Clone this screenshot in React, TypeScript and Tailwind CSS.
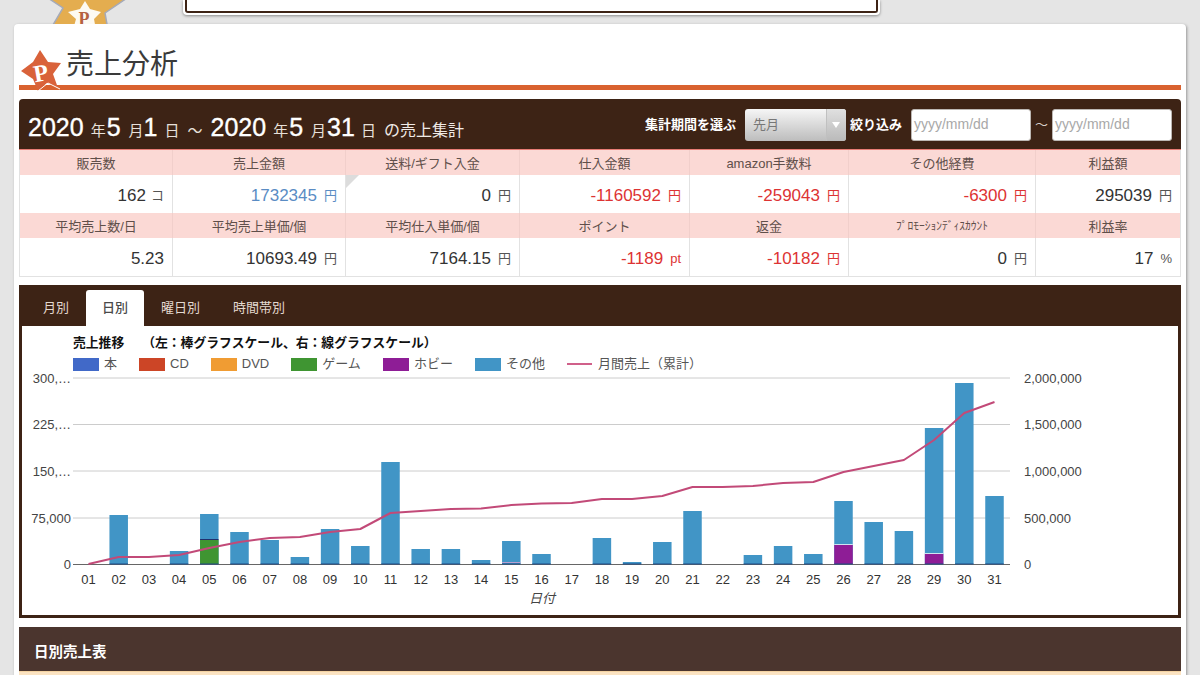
import React from "react";

const tops: Record<number, number> = {2:515,4:551,5:514,6:532,7:540,8:557,9:529,10:546,11:462,12:549,13:549,14:560,15:541,16:554,18:538,19:562,20:542,21:511,23:555,24:546,25:554,26:501,27:522,28:531,29:428,30:383,31:496};
const line = [564,557,557,555,548,542,538,537,532,529,513,511,509,508.5,505,503.5,503,499,499,496,487,487,486,483,482,472,466,460,440,413,402];
const cx = (d: number) => 88.5 + (d - 1) * 30.2;
const pts = line.map((y, i) => cx(i + 1) + "," + y).join(" ");
const grid = [378, 424.5, 471, 518];
const left = ["300,…", "225,…", "150,…", "75,000", "0"];
const right = ["2,000,000", "1,500,000", "1,000,000", "500,000", "0"];
const ys = [378, 424.5, 471, 518, 564.5];

type Cell = { label: string; value: string; unit: string; color?: string; small?: boolean };
const row1: Cell[] = [
  { label: "販売数", value: "162", unit: "コ" },
  { label: "売上金額", value: "1732345", unit: "円", color: "text-[#5a8cc4]" },
  { label: "送料/ギフト入金", value: "0", unit: "円" },
  { label: "仕入金額", value: "-1160592", unit: "円", color: "text-[#dd3333]" },
  { label: "amazon手数料", value: "-259043", unit: "円", color: "text-[#dd3333]" },
  { label: "その他経費", value: "-6300", unit: "円", color: "text-[#dd3333]" },
  { label: "利益額", value: "295039", unit: "円" },
];
const row2: Cell[] = [
  { label: "平均売上数/日", value: "5.23", unit: "" },
  { label: "平均売上単価/個", value: "10693.49", unit: "円" },
  { label: "平均仕入単価/個", value: "7164.15", unit: "円" },
  { label: "ポイント", value: "-1189", unit: "pt", color: "text-[#dd3333]" },
  { label: "返金", value: "-10182", unit: "円", color: "text-[#dd3333]" },
  { label: "ﾌﾟﾛﾓｰｼｮﾝﾃﾞｨｽｶｳﾝﾄ", value: "0", unit: "円", small: true },
  { label: "利益率", value: "17", unit: "%" },
];

const legend = [
  { n: "本", c: "bg-[#4169c8]" },
  { n: "CD", c: "bg-[#cc4526]" },
  { n: "DVD", c: "bg-[#f09c33]" },
  { n: "ゲーム", c: "bg-[#3f9532]" },
  { n: "ホビー", c: "bg-[#8e1d96]" },
  { n: "その他", c: "bg-[#4195c6]" },
];

const big = "text-[25px] [-webkit-text-stroke:0.35px_white]";
const sm = "text-[15px] text-[#e8e0da]";

function Rows({ cells, h }: { cells: Cell[]; h: string }) {
  return (
    <>
      {cells.map((c, i) => (
        <div key={c.label} className={"flex h-[25px] items-center justify-center bg-[#fbd9d5] pt-[2px] text-[#5f4f4a] " + (c.small ? "text-[11.5px] " : "text-[13px] ") + (i > 0 ? "border-l border-[#f1cfcb]" : "")}>
          {c.label}
        </div>
      ))}
      {cells.map((c, i) => (
        <div key={c.label + "v"} className={"relative flex items-center justify-end bg-white pr-[8px] " + h + " " + (i > 0 ? "border-l border-[#e2e2e2]" : "")}>
          {c.label === "送料/ギフト入金" && <span className="absolute left-0 top-0 h-0 w-0 border-r-[13px] border-t-[13px] border-r-transparent border-t-[#dcdcdc]" />}
          <span className={"text-[17px] " + (c.color ?? "text-[#333333]")}>{c.value}</span>
          {c.unit && <span className={"text-[13px] " + (c.unit === "コ" ? "ml-[5px] " : "ml-[7px] ") + (c.color ?? "text-[#555555]")}>{c.unit}</span>}
        </div>
      ))}
    </>
  );
}

export default function App() {
  return (
    <div className="h-[675px] w-[1200px] overflow-hidden bg-[#e5e5e5] [font-family:'Liberation_Sans','Noto_Sans_CJK_JP',sans-serif]">
      <div className="relative h-[24px]">
        <svg className="absolute left-[30px] top-0" width="110" height="24" viewBox="0 0 110 24">
          <polygon points="15,-4 33,8 20,30 78,30 75,13 100,-4" fill="#e4ad4f" stroke="#a5aab8" strokeWidth="1.5" />
          <polygon points="55,1 60,9 71,12 64,19 66,30 43,30 46,19 38,12 50,9" fill="#fdfaf2" />
          <text x="54" y="25" textAnchor="middle" fontFamily="Liberation Serif" fontWeight="700" fontSize="18" fill="#b5623f">P</text>
        </svg>
        <div className="ml-[183px] h-[15px] w-[697px] rounded-b-[4px] bg-white px-[2px] pb-[2px] shadow-[0_1px_3px_rgba(0,0,0,0.4)]">
          <div className="h-[13px] rounded-b-[3px] border-x-2 border-b-2 border-[#3d2315] bg-white" />
        </div>
      </div>

      <div className="ml-[14px] w-[1172px] rounded-[4px] bg-white px-[5px] pb-[20px] shadow-[1px_1px_3px_rgba(0,0,0,0.35)]">
        <div className="relative flex h-[66px] items-end border-b-[5px] border-[#d9622f] pl-[47px]">
          <svg className="absolute left-0 top-[26px]" width="46" height="45" viewBox="0 0 46 45">
            <polygon points="21,0 29,12 42,13 34,24 39,38 28,33 19,41 14,29 2,21 14,12" fill="#d9623a" />
            <text x="22" y="31" textAnchor="middle" transform="rotate(-10 22 24)" fontFamily="Liberation Serif" fontWeight="700" fontSize="24" fill="#ffffff">P</text>
            <polyline points="19,41 29,33 41,39" fill="none" stroke="#ffffff" strokeWidth="1" />
          </svg>
          <h1 className="text-[28px] font-normal leading-[40px] text-[#3a3a3a]">売上分析</h1>
        </div>

        <div className="mt-[9px] flex h-[51px] items-center justify-between rounded-t-[4px] border-b border-[#e87d75] bg-[#3d2315] pl-[9px] pr-[9px] text-white">
          <div className="flex items-baseline pt-[8px]">
            <span className={big}>2020</span>
            <span className={"ml-[7px] " + sm}>年</span>
            <span className={"ml-px " + big}>5</span>
            <span className={"ml-[8px] " + sm}>月</span>
            <span className={big}>1</span>
            <span className={"ml-[7px] " + sm}>日</span>
            <span className={"ml-[8px] " + sm}>～</span>
            <span className={"ml-[8px] " + big}>2020</span>
            <span className={"ml-[7px] " + sm}>年</span>
            <span className={"ml-px " + big}>5</span>
            <span className={"ml-[8px] " + sm}>月</span>
            <span className={"ml-px " + big}>31</span>
            <span className={"ml-[6px] " + sm}>日</span>
            <span className="ml-[8px] text-[16px] text-[#f0eae6]">の売上集計</span>
          </div>
          <div className="flex items-center pt-px">
            <span className="text-[13px] font-bold">集計期間を選ぶ</span>
            <div className="ml-[9px] flex h-[32px] w-[101px] overflow-hidden rounded-[3px] bg-gradient-to-b from-[#f6f6f6] to-[#bdbdbd]">
              <span className="flex flex-1 items-center pl-[8px] text-[13px] text-[#777777]">先月</span>
              <span className="flex w-[20px] items-center justify-center border-l border-[#c0c0c0] bg-gradient-to-b from-[#e0e0e0] to-[#bababa]">
                <span className="h-0 w-0 border-x-[4px] border-t-[6px] border-x-transparent border-t-white" />
              </span>
            </div>
            <span className="ml-[4px] text-[13px] font-bold">絞り込み</span>
            <div className="ml-[9px] flex h-[32px] w-[120px] items-center rounded-[3px] border border-[#bcb7b3] bg-white pl-[2px] text-[14px] text-[#a8a8a8]">yyyy/mm/dd</div>
            <span className="ml-[4px] text-[13px] text-[#d8d0ca]">～</span>
            <div className="ml-[4px] flex h-[32px] w-[120px] items-center rounded-[3px] border border-[#bcb7b3] bg-white pl-[2px] text-[14px] text-[#a8a8a8]">yyyy/mm/dd</div>
          </div>
        </div>

        <div className="grid grid-cols-[152px_173px_174px_170px_159px_187px_145px] border-x border-b border-[#e2e2e2]">
          <Rows cells={row1} h="h-[38px] pt-[4px]" />
          <Rows cells={row2} h="h-[38px] pt-[3px]" />
        </div>

        <div className="mt-[8px] bg-[#3d2315] px-[3px] pb-[3px] pt-[5px]">
          <div className="flex h-[36px] gap-px pl-[5px] text-[13px]">
            {["月別", "日別", "曜日別", "時間帯別"].map((t) => (
              <div key={t} className={t === "日別" ? "flex items-center rounded-t-[3px] bg-white px-[16px] font-medium text-[#4a4a4a]" : "flex items-center px-[16px] text-[#e4d9d0]"}>{t}</div>
            ))}
          </div>
          <div className="h-[289px] bg-white pl-[51px] pt-[9px]">
            <div className="flex gap-[18px] text-[12.8px] font-bold leading-[16px] text-[#111111]">
              <span>売上推移</span>
              <span>（左：棒グラフスケール、右：線グラフスケール）</span>
            </div>
            <div className="mt-[5px] flex h-[16px] items-center gap-[22px] text-[13px] text-[#555555]">
              {legend.map((l) => (
                <div key={l.n} className="flex items-center gap-[5px]">
                  <span className={"h-[13px] w-[26px] " + l.c} />
                  <span>{l.n}</span>
                </div>
              ))}
              <div className="flex items-center gap-[6px]">
                <span className="h-[2px] w-[25px] bg-[#d0608a]" />
                <span>月間売上（累計）</span>
              </div>
            </div>
            <svg className="-ml-[51px] block" width="1156" height="240" viewBox="22 372 1156 240" fontFamily="Liberation Sans, Noto Sans CJK JP, sans-serif">
              {grid.map((y) => <line key={y} x1="73" x2="1010" y1={y} y2={y} stroke="#cccccc" strokeWidth="1" />)}
              {Object.entries(tops).map(([k, t]) => {
                const d = Number(k);
                const x = cx(d) - 9.25;
                return <rect key={k} x={x} y={t} width="18.5" height={564 - t} fill="#4195c6" />;
              })}
              <rect x={cx(5) - 9.25} y="540" width="18.5" height="24" fill="#3f9532" />
              <rect x={cx(5) - 9.25} y="539" width="18.5" height="1" fill="#22306e" />
              <rect x={cx(15) - 9.25} y="562" width="18.5" height="1" fill="#b9a0d0" />
              <rect x={cx(26) - 9.25} y="544" width="18.5" height="1" fill="#cfe4f2" />
              <rect x={cx(26) - 9.25} y="545" width="18.5" height="19" fill="#8e1d96" />
              <rect x={cx(29) - 9.25} y="553" width="18.5" height="1" fill="#cfe4f2" />
              <rect x={cx(29) - 9.25} y="554" width="18.5" height="10" fill="#8e1d96" />
              <line x1="73" x2="1010" y1="564.5" y2="564.5" stroke="#666666" strokeWidth="1" />
              {Object.keys(tops).map((k) => <rect key={k} x={cx(Number(k)) - 9.25} y="563.5" width="18.5" height="1" fill="#1d4a86" />)}
              <polyline points={pts} fill="none" stroke="#c24a78" strokeWidth="2" strokeLinejoin="round" />
              {left.map((t, i) => <text key={t} x="71" y={ys[i] + 4.5} textAnchor="end" fontSize="13" fill="#444444">{t}</text>)}
              {right.map((t, i) => <text key={t} x="1024" y={ys[i] + 4.5} fontSize="13" fill="#444444">{t}</text>)}
              {line.map((_, i) => <text key={i} x={cx(i + 1)} y="583.5" textAnchor="middle" fontSize="13" fill="#333333">{String(i + 1).padStart(2, "0")}</text>)}
              <text x="542" y="603" textAnchor="middle" fontSize="13" fontStyle="italic" fill="#444444">日付</text>
            </svg>
          </div>
        </div>

        <div className="mt-[9px] flex h-[44px] items-center bg-[#4b352e] pl-[15px] pt-[8px] text-[14.5px] font-bold text-white">日別売上表</div>
        <div className="h-[12px] border-t border-[#f4d3a2] bg-[#fbe3c2]" />
      </div>
    </div>
  );
}
